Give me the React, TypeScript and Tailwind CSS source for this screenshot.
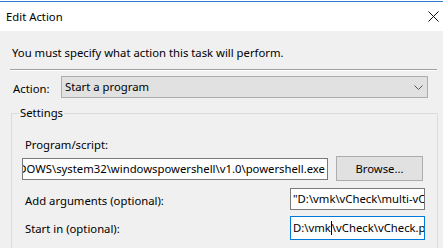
import React from "react";

const font = { fontFamily: '"Segoe UI", "Noto Sans", sans-serif' };

function CloseIcon() {
  return (
    <svg width="11" height="11" viewBox="0 0 11 11" className="block">
      <path d="M0.5 0.5 L10.5 10.5 M10.5 0.5 L0.5 10.5" stroke="#111" strokeWidth="1" />
    </svg>
  );
}

function Chevron() {
  return (
    <svg width="9" height="5" viewBox="0 0 9 5" className="block">
      <path d="M0.5 0.5 L4.5 4.5 L8.5 0.5" fill="none" stroke="#555" strokeWidth="1" />
    </svg>
  );
}

export default function App() {
  return (
    <div
      className="w-[443px] h-[248px] overflow-hidden bg-[#f0f0f0] text-[11.3px] leading-[16px] text-black"
      style={font}
    >
      {/* title bar */}
      <div className="bg-white">
        <div className="h-px bg-white" />
        <div className="h-px bg-[#2b7bd0]" />
        <div className="h-[29px] flex items-center justify-between pl-[6px] pr-[2px]">
          <span className="mt-[1px]">Edit Action</span>
          <div className="w-[11px] mr-[2px]">
            <CloseIcon />
          </div>
        </div>
      </div>

      {/* body */}
      <div className="pl-[12px] pt-[14px]">
        <div>You must specify what action this task will perform.</div>
      </div>
      <div className="mt-[8px] ml-[10px] mr-[6px] border-t border-[#a0a0a0] border-b border-b-white" />

      <div className="flex mt-[5px] pl-[13px]">
        <div className="w-[48px] pt-[5px]">Action:</div>
        <div className="w-[367px] h-[22px] flex items-center justify-between bg-[#e1e1e1] border border-[#adadad] pl-[3px] pr-[4px]">
          <span className="-mt-[1px]">Start a program</span>
          <Chevron />
        </div>
      </div>

      <fieldset className="mt-[7px] ml-[11px] w-[427px] border border-[#dcdcdc] pb-[30px]">
        <legend className="ml-[7px] px-px">Settings</legend>

        <div className="pl-[13px] mt-[16px]">Program/script:</div>
        <div className="flex mt-[2px] pl-[10px]">
          <div className="w-[306px] h-[22px] mt-[3px] bg-white border border-[#7a7a7a] overflow-hidden flex items-center justify-end pr-[2px]">
            <span className="whitespace-nowrap">C:\WINDOWS\system32\windowspowershell\v1.0\powershell.exe</span>
          </div>
          <div className="ml-[8px] w-[87px] h-[25px] mt-[1px] bg-[#e1e1e1] border border-[#adadad] flex items-center justify-center">
            Browse...
          </div>
        </div>

        <div className="flex mt-[7px]">
          <div className="w-[278px] pl-[13px] pt-[5px]">Add arguments (optional):</div>
          <div className="w-[135px] h-[22px] bg-white border border-[#7a7a7a] overflow-hidden flex items-center pl-[2px]">
            <span className="whitespace-nowrap">"D:\vmk\vCheck\multi-vCheck.ps1"</span>
          </div>
        </div>

        <div className="flex mt-[6px]">
          <div className="w-[278px] pl-[13px] pt-[5px]">Start in (optional):</div>
          <div className="w-[135px] h-[24px] bg-white border border-[#0078d7] overflow-hidden flex items-center pl-[2px]">
            <span className="whitespace-nowrap flex items-center">
              D:\vmk
              <span className="inline-block w-px h-[14px] bg-black" />
              \vCheck\vCheck.ps1
            </span>
          </div>
        </div>
      </fieldset>
    </div>
  );
}
